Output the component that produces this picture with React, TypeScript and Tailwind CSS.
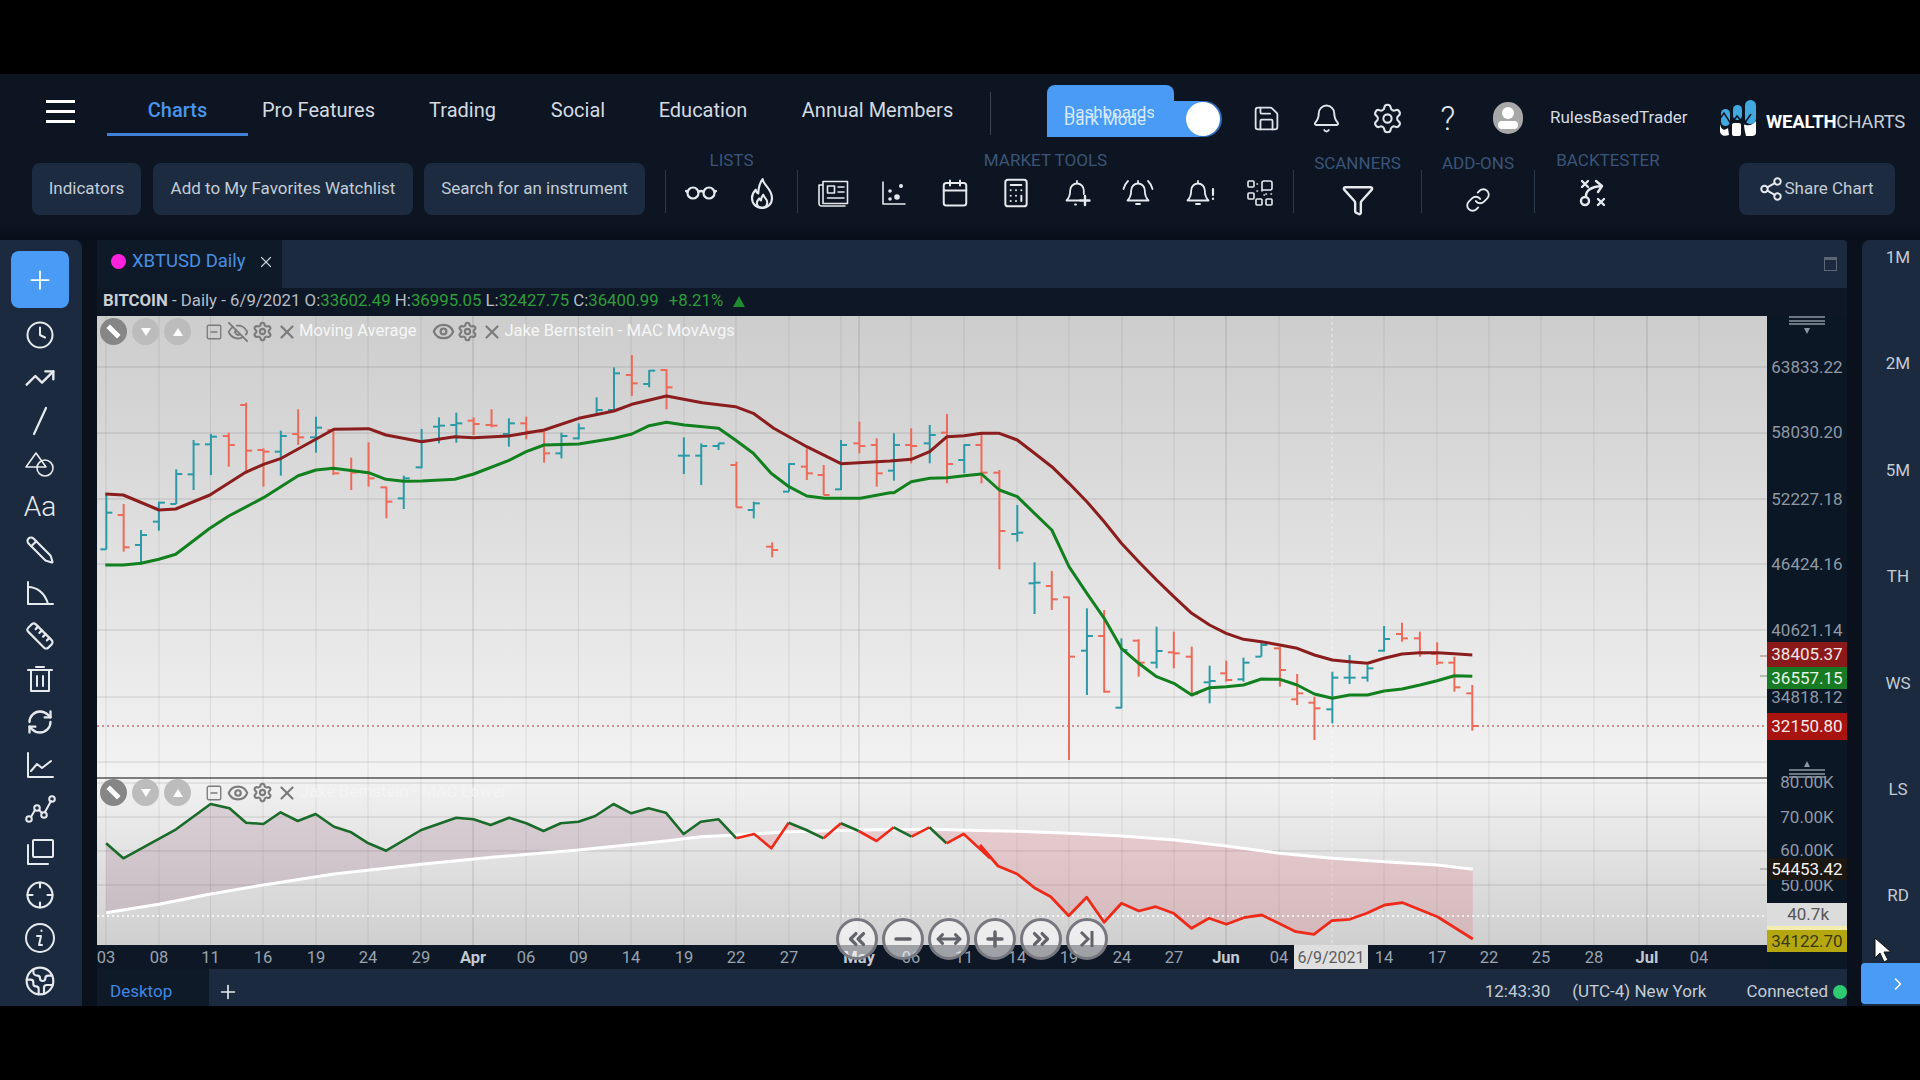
import React from 'react';
import { Calendar, Calculator, Bell, Funnel, Link, Save, Settings, Share2, Clock, TrendingUp, Pencil, Ruler, RefreshCw, Earth, Crosshair, X, Plus, Minus, ChevronsLeft, ChevronsRight, ChevronRight, MoveHorizontal, Eye, EyeOff, SquareMinus } from 'lucide-react';

type Pt = [number, number];
const z4 = (p: Pt): Pt => [90 + p[0] / 1.96, 310 + p[1] / 3];
const z5 = (p: Pt): Pt => [880 + p[0] / 1.5077, 310 + p[1] / 3];
const z6 = (p: Pt): Pt => [90 + p[0] / 1.742, 770 + p[1] / 3];
const z7 = (p: Pt): Pt => [980 + p[0] / 1.668, 770 + p[1] / 3];
const pts = (a: Pt[]) => a.map((p) => `${p[0].toFixed(1)},${p[1].toFixed(1)}`).join(' ');

type Bar = [number, number, number, number, number, string];
const barsA: Bar[] = [
  [32, 555, 718, 718, 608, 't'], [66, 582, 725, 615, 712, 'r'], [100, 660, 765, 705, 675, 't'], [135, 575, 662, 635, 578, 't'],
  [169, 478, 582, 582, 492, 't'], [203, 390, 540, 493, 403, 't'], [237, 372, 495, 403, 380, 't'], [272, 368, 470, 378, 405, 'r'],
  [306, 278, 490, 285, 422, 'r'], [340, 415, 530, 420, 425, 'r'], [374, 362, 497, 425, 378, 't'], [408, 298, 405, 372, 382, 'r'],
  [443, 320, 428, 382, 353, 't'], [477, 355, 495, 360, 490, 'r'], [512, 443, 540, 480, 488, 'r'], [546, 397, 530, 487, 505, 'r'],
  [581, 530, 625, 532, 575, 'r'], [615, 497, 597, 565, 505, 't'], [650, 357, 475, 472, 392, 't'], [684, 322, 400, 350, 347, 't'],
  [718, 308, 398, 345, 340, 't'], [752, 322, 375, 332, 342, 'r'], [787, 298, 352, 345, 347, 'r'], [821, 325, 410, 372, 340, 't'],
  [855, 320, 388, 340, 365, 'r'], [890, 365, 458, 365, 430, 'r'], [924, 368, 445, 430, 378, 't'], [958, 340, 388, 385, 355, 't'],
  [993, 262, 315, 315, 300, 't'], [1027, 172, 300, 300, 190, 't'], [1062, 135, 258, 195, 220, 'r'], [1096, 180, 232, 222, 182, 't'],
  [1130, 178, 298, 180, 232, 'r'], [1164, 382, 492, 437, 437, 't'], [1198, 400, 525, 437, 408, 't'], [1232, 400, 420, 408, 400, 't'],
  [1267, 455, 592, 465, 592, 'r'], [1301, 575, 625, 600, 580, 't'], [1337, 697, 742, 710, 720, 'r'], [1370, 460, 545, 545, 462, 't'],
  [1405, 415, 510, 470, 490, 'r'], [1438, 465, 555, 495, 555, 'r'], [1472, 390, 540, 538, 405, 't'], [1508, 335, 430, 400, 408, 'r'],
  [1542, 385, 530, 405, 490, 'r'],
];
const barsB: Bar[] = [
  [21, 370, 512, 482, 405, 't'], [47, 355, 460, 405, 408, 'r'], [75, 345, 460, 400, 375, 't'], [101, 312, 520, 368, 462, 'r'],
  [127, 403, 490, 450, 405, 't'], [153, 370, 520, 405, 488, 'r'], [180, 480, 778, 488, 663, 'r'], [207, 585, 695, 672, 668, 't'],
  [233, 757, 912, 820, 818, 't'], [259, 783, 900, 828, 868, 'r'], [285, 860, 1350, 862, 1040, 'r'], [312, 895, 1155, 1022, 978, 't'],
  [338, 900, 1148, 978, 1145, 'r'], [364, 985, 1195, 1193, 1020, 't'], [390, 988, 1100, 992, 1058, 'r'], [417, 950, 1075, 1058, 1023, 't'],
  [443, 965, 1075, 1027, 1030, 'r'], [470, 1010, 1155, 1040, 1152, 'r'], [497, 1067, 1180, 1117, 1113, 't'], [522, 1052, 1115, 1090, 1110, 'r'],
  [548, 1043, 1115, 1108, 1058, 't'], [575, 995, 1040, 1040, 1005, 't'], [603, 1010, 1130, 1015, 1080, 'r'], [629, 1092, 1185, 1168, 1150, 'r'],
  [655, 1160, 1290, 1178, 1195, 'r'], [682, 1085, 1240, 1198, 1103, 't'], [708, 1035, 1122, 1103, 1103, 't'], [735, 1065, 1115, 1103, 1075, 't'],
  [760, 948, 1025, 1022, 987, 't'], [787, 938, 995, 972, 985, 'r'], [814, 965, 1040, 985, 1030, 'r'], [840, 997, 1065, 1032, 1058, 'r'],
  [866, 1040, 1145, 1058, 1132, 'r'], [893, 1125, 1262, 1150, 1248, 'r'],
];
const allBars = [
  ...barsA.map((b) => ({ x: 90 + b[0] / 1.96, hi: 310 + b[1] / 3, lo: 310 + b[2] / 3, o: 310 + b[3] / 3, c: 310 + b[4] / 3, k: b[5] })),
  ...barsB.map((b) => ({ x: 880 + b[0] / 1.5077, hi: 310 + b[1] / 3, lo: 310 + b[2] / 3, o: 310 + b[3] / 3, c: 310 + b[4] / 3, k: b[5] })),
];

const redMA: Pt[] = [
  ...([[30, 552], [65, 555], [135, 600], [168, 597], [235, 555], [305, 487], [340, 463], [375, 445], [478, 358], [546, 356], [580, 375], [650, 395], [715, 380], [752, 383], [820, 378], [890, 360], [958, 325], [1027, 303], [1062, 283], [1130, 258], [1200, 278], [1265, 290], [1300, 310], [1340, 355], [1405, 410], [1472, 461], [1568, 453]] as Pt[]).map(z4),
  ...([[47, 448], [75, 425], [101, 380], [127, 377], [153, 370], [180, 370], [207, 390], [233, 430], [259, 470], [285, 520], [312, 575], [338, 635], [364, 700], [390, 755], [417, 810], [443, 860], [470, 910], [497, 945], [522, 970], [548, 988], [575, 995], [603, 1005], [629, 1015], [655, 1035], [682, 1050], [708, 1055], [735, 1060], [760, 1045], [787, 1032], [814, 1028], [840, 1028], [866, 1031], [893, 1035]] as Pt[]).map(z5),
];
const greenMA: Pt[] = [
  ...([[30, 765], [65, 765], [100, 760], [135, 748], [168, 733], [235, 655], [272, 618], [340, 563], [408, 497], [443, 480], [477, 475], [546, 488], [580, 508], [615, 514], [650, 513], [715, 508], [752, 492], [820, 452], [855, 425], [890, 405], [958, 402], [1027, 385], [1062, 372], [1096, 347], [1130, 337], [1165, 345], [1232, 355], [1265, 390], [1300, 430], [1335, 490], [1370, 530], [1405, 558], [1440, 565], [1510, 565], [1568, 548]] as Pt[]).map(z4),
  ...([[21, 548], [47, 515], [75, 505], [101, 503], [127, 497], [153, 492], [180, 540], [207, 560], [233, 610], [259, 660], [285, 770], [312, 850], [338, 925], [364, 1015], [390, 1060], [417, 1100], [443, 1120], [470, 1155], [497, 1133], [522, 1130], [548, 1125], [575, 1107], [603, 1108], [629, 1125], [655, 1152], [682, 1165], [708, 1155], [735, 1155], [760, 1143], [787, 1137], [814, 1125], [840, 1112], [866, 1097], [893, 1099]] as Pt[]).map(z5),
];

const oscGreen1 = ([[28, 220], [58, 265], [150, 178], [210, 102], [243, 115], [272, 158], [302, 162], [332, 127], [362, 153], [393, 132], [425, 170], [455, 187], [485, 220], [516, 242], [577, 180], [638, 143], [668, 148], [698, 165], [730, 143], [760, 160], [790, 183], [820, 160], [851, 155], [880, 138], [912, 102], [943, 130], [973, 115], [1003, 128], [1034, 192], [1064, 155], [1095, 148], [1126, 205]] as Pt[]).map(z6);
const oscMid = ([[1126, 205], [1157, 192], [1187, 235], [1217, 158], [1248, 180], [1278, 205], [1308, 160], [1339, 183], [1370, 213], [1400, 172], [1431, 200], [1462, 172], [1492, 220], [1522, 192], [1568, 265]] as Pt[]).map(z6);
const oscEnd = ([[0, 225], [30, 288], [62, 312], [92, 355], [118, 380], [148, 437], [178, 382], [207, 457], [236, 400], [265, 423], [293, 410], [323, 430], [353, 475], [382, 445], [411, 463], [440, 443], [470, 435], [527, 485], [557, 493], [587, 452], [617, 448], [645, 430], [675, 405], [705, 398], [763, 440], [822, 507]] as Pt[]).map(z7);
const midSegs: [number, number, string][] = [[0, 3, '#ee2a1a'], [3, 5, '#1a6a2a'], [5, 6, '#ee2a1a'], [6, 7, '#1a6a2a'], [7, 9, '#ee2a1a'], [9, 10, '#1a6a2a'], [10, 11, '#ee2a1a'], [11, 12, '#1a6a2a'], [12, 14, '#ee2a1a']];
const whiteLine: Pt[] = [
  ...([[28, 428], [120, 403], [210, 372], [302, 345], [425, 312], [577, 283], [700, 262], [851, 240], [1003, 213], [1064, 200], [1126, 195], [1217, 185], [1339, 180], [1462, 178], [1568, 182]] as Pt[]).map(z6),
  ...([[62, 184], [148, 190], [236, 198], [325, 210], [411, 228], [499, 250], [587, 265], [675, 275], [763, 285], [822, 298]] as Pt[]).map(z7),
];
const oscPoly = [...oscGreen1, ...oscMid.slice(1), ...oscEnd, ...[...whiteLine].reverse()];

const dates: [number, string, boolean][] = [
  [106, '03', false], [159, '08', false], [210.5, '11', false], [263, '16', false], [316, '19', false], [368, '24', false], [421, '29', false], [473, 'Apr', true], [526, '06', false], [578.5, '09', false], [631, '14', false], [684, '19', false], [736, '22', false], [789, '27', false], [859, 'May', true], [911, '06', false], [964, '11', false], [1017, '14', false], [1069, '19', false], [1122, '24', false], [1174, '27', false], [1226, 'Jun', true], [1279, '04', false], [1384, '14', false], [1437, '17', false], [1489, '22', false], [1541, '25', false], [1594, '28', false], [1647, 'Jul', true], [1699, '04', false],
];
const gridX = [106, 159, 210.5, 263, 316, 368, 421, 473, 526, 578.5, 631, 684, 736, 789, 841, 859, 911, 964, 1017, 1069, 1122, 1174, 1226, 1279, 1384, 1437, 1489, 1541, 1594, 1647, 1699];
const darkX = [473, 859, 1226, 1647];
const gridY = [367, 433, 499, 564, 630, 697, 762, 783, 817, 851, 885];

const priceLabels: [number, string][] = [[367, '63833.22'], [432, '58030.20'], [499, '52227.18'], [564, '46424.16'], [630, '40621.14'], [696.5, '34818.12'], [782, '80.00K'], [817, '70.00K'], [850, '60.00K'], [884.5, '50.00K']];

const S = { strokeWidth: 1.6, fill: 'none', stroke: 'currentColor', strokeLinecap: 'round', strokeLinejoin: 'round' } as any;
const BELL = 'M15 5.500a6.800 6.800 0 0 0-6.800 6.800c0 5-1.200 7.800-3.700 10.200h21c-2.500-2.400-3.700-5.200-3.700-10.200A6.800 6.800 0 0 0 15 5.500zM15 3v2.500M13 26h4';

const Glasses = () => (<svg width="32" height="16" viewBox="0 0 32 16" {...S} strokeWidth={2.200}><circle cx="8" cy="8" r="5.500" /><circle cx="24" cy="8" r="5.500" /><path d="M13.500 7c1.500-1.200 3.500-1.200 5 0M2.500 7 1 6M29.500 7 31 6" /></svg>);
const Fire = () => (<svg width="30" height="33" viewBox="0 0 24 26" {...S} strokeWidth={1.700}><path d="M12.500 1.500c.5 4.500 7.500 8 7.500 15 0 5-3.500 8-8 8s-8-3.200-8-8c0-3 1.500-5 3-6.500.3 1.500.8 2.500 2 3 .2-4.500 1-8.500 3.500-11.500z" /><path d="M12 24.500c-2.800 0-4.500-2.200-4-4.500.2-1.500 1.200-2.300 1.800-3 .3.800.8 1.300 1.400 1.500.2-1.800.7-3.200 1.800-4.500.3 2 3.500 3.500 3.200 6.500-.2 2.300-1.800 4-4.200 4z" /></svg>);
const News = () => (<svg width="32" height="27" viewBox="0 0 32 27" {...S}><path d="M6 1.500h24.500v22H6zM6 5H2v18.500a2.500 2.500 0 0 0 2.500 2.500H28" /><rect x="10.500" y="6" width="7" height="7" /><path d="M21 7h6M21 12h6M10.500 18h16.500" /></svg>);
const Scatter = () => (<svg width="26" height="26" viewBox="0 0 26 26" {...S}><path d="M2 2v22h22" /><circle cx="16" cy="17" r="2" fill="currentColor" /><circle cx="9" cy="19" r="1" fill="currentColor" /><circle cx="9" cy="11" r="1" fill="currentColor" /><circle cx="20" cy="6" r="1.200" fill="currentColor" /></svg>);
const BellAdd = () => (<svg width="30" height="30" viewBox="0 0 30 30" {...S} strokeWidth={1.800}><path d="M15 3v2.500M13 26.500h1M15 5.500a6.800 6.800 0 0 0-6.800 6.800c0 5-1.200 7.800-3.700 10.200H18M21.800 16v-3.700A6.800 6.800 0 0 0 15 5.500" /><path d="M23 18v9M18.500 22.500h9" strokeWidth={2.400} /></svg>);
const BellRings = () => (<svg width="32" height="30" viewBox="0 0 32 30" {...S} strokeWidth={1.800}><g transform="translate(1 0)"><path d={BELL} /></g><path d="M6 3C3.500 5.500 2 8 1.500 11M26 3c2.500 2.500 4 5 4.500 8" /></svg>);
const BellBang = () => (<svg width="32" height="30" viewBox="0 0 32 30" {...S} strokeWidth={1.800}><path d={BELL} /><path d="M30 11v6M30 20.500v.5" strokeWidth={2.200} /></svg>);
const QrLike = () => (<svg width="30" height="30" viewBox="0 0 30 30" {...S}><rect x="3" y="3" width="6" height="6" rx="1" /><rect x="3" y="15" width="6" height="6" rx="1" /><rect x="11" y="21" width="6" height="6" rx="1" /><rect x="21" y="21" width="6" height="6" rx="1" /><path d="M17 13V5a2 2 0 0 1 2-2h6a2 2 0 0 1 2 2v5a2 2 0 0 1-2 2h-8" /><path d="M12 6h.5M12 13h.5M21 16h.5M26 16h.5M19 17h.5" /></svg>);
const Plays = () => (<svg width="30" height="30" viewBox="0 0 30 30" {...S} strokeWidth={2.400}><path d="M4 3l6 6M10 3 4 9M20 21l6 6M26 21l-6 6" /><circle cx="7" cy="23" r="4" /><path d="M8 18c0-6 5-9 15-10M18 3l6 5-4 6" /></svg>);
const Shapes = () => (<svg width="32" height="30" viewBox="0 0 32 30" {...S}><path d="M12 4 2 18h20z" /><circle cx="21" cy="19" r="8" /></svg>);
const Angle = () => (<svg width="30" height="28" viewBox="0 0 30 28" {...S} strokeWidth={2}><path d="M3 3v22h25" /><path d="M3 8c9 0 17 6 20 17" /></svg>);
const ChartL = () => (<svg width="30" height="30" viewBox="0 0 30 30" {...S} strokeWidth={2}><path d="M3 3v24h25" /><path d="M6 21l6-7 5 4 9-7" /></svg>);
const Line = () => (<svg width="30" height="30" viewBox="0 0 30 30" {...S} strokeWidth={2.200}><path d="M9 28 21 2" /></svg>);
const Trash = () => (<svg width="28" height="28" viewBox="0 0 28 28" {...S} strokeWidth={2}><path d="M2 5h24M10 2h8M5 6v20h18V6M11 11v10M17 11v10" /></svg>);
const Nodes = () => (<svg width="32" height="30" viewBox="0 0 32 30" {...S} strokeWidth={2}><circle cx="5" cy="25" r="2.800" /><circle cx="13" cy="14" r="2.800" /><circle cx="20" cy="21" r="2.800" /><circle cx="28" cy="5" r="2.800" /><path d="M7 23l4-7M15 16l3 3M21 18l6-11" /></svg>);
const Stack = () => (<svg width="30" height="30" viewBox="0 0 30 30" {...S} strokeWidth={2}><rect x="8" y="3" width="20" height="17" rx="1" /><path d="M3 8v19h20" /></svg>);
const InfoI = () => (<svg width="32" height="32" viewBox="0 0 32 32" {...S} strokeWidth={2}><circle cx="16" cy="16" r="14" /><path d="M17.500 8.500v.5M13 14h4l-2 9h3" /></svg>);
const Ham = () => (<div className="flex flex-col gap-[7px] w-[29px] mt-[26px] ml-[46px]"><div className="h-[3px] bg-white" /><div className="h-[3px] bg-white" /><div className="h-[3px] bg-white" /></div>);

const Logo = () => (
  <svg width="38" height="37" viewBox="0 0 38 37">
    <rect x="2" y="9" width="9" height="17" rx="4.500" fill="#3fa9e0" />
    <rect x="14" y="5" width="9" height="15" rx="4.500" fill="#3fa9e0" />
    <rect x="26" y="0" width="11" height="24" rx="5.500" fill="#3fa9e0" />
    <path d="M1 24c1 6 4 7 8 4l1 7c-5 2-9 0-9-4z" fill="#fff" />
    <rect x="13" y="23" width="9" height="13" rx="2" fill="#fff" />
    <path d="M25 24c3 2 8 2 12-3v12c0 2-2 3-4 3h-6c-1-4-2-8-2-12z" fill="#fff" />
    <path d="M0 20 5 13 12 24 18 16 25 24 32 14" fill="none" stroke="#0c1521" strokeWidth="1.500" />
  </svg>
);

const Sep = () => <div className="w-px h-[43px] mt-[20px] bg-[#2c3a4e] shrink-0" />;
const Lbl = ({ children }: any) => <div className="h-5 leading-5 text-[17px] text-[#3c5478] text-center whitespace-nowrap">{children}</div>;
const IconCell = ({ children }: any) => <div className="w-[61px] h-10 flex items-center justify-center text-[#e6eaef]">{children}</div>;

const TopBtn = ({ w, children }: any) => <div className={`${w} h-[52px] mt-[13px] rounded-lg bg-[#1c2b40] text-[#c3ccd6] text-[17px] flex items-center justify-center whitespace-nowrap shrink-0`}>{children}</div>;

const Circle = ({ children, dark }: any) => (
  <div className={`w-[27px] h-[27px] rounded-full flex items-center justify-center ${dark ? 'bg-[#868686]' : 'bg-[#bcbcbc]'} text-[#eeeeee]`}>{children}</div>
);
const LegendBase = () => (
  <div className="flex items-center gap-[5px]">
    <Circle dark><div className="w-[15px] h-[5px] bg-white rotate-45" /></Circle>
    <Circle><svg width="10" height="8" viewBox="0 0 10 8"><path d="M0 0h10L5 8z" fill="#fff" /></svg></Circle>
    <Circle><svg width="10" height="8" viewBox="0 0 10 8"><path d="M0 8h10L5 0z" fill="#fff" /></svg></Circle>
  </div>
);
const Nav = ({ children }: any) => (
  <div className="w-[42px] h-[42px] rounded-full bg-[#ffffff99] border-[3px] border-[#77777f] flex items-center justify-center text-[#63636b]">{children}</div>
);

export default function App() {
  const sideIcons = [
    <Clock size={30} strokeWidth={1.6} />, <TrendingUp size={32} strokeWidth={1.8} />, <Line />, <Shapes />,
    <span className="text-[28px] font-light leading-none text-[#e6eaef]">Aa</span>, <Pencil size={30} strokeWidth={1.7} className="-scale-x-100" />, <Angle />, <Ruler size={30} strokeWidth={1.7} />,
    <Trash />, <RefreshCw size={28} strokeWidth={2} />, <ChartL />, <Nodes />, <Stack />, <Crosshair size={30} strokeWidth={1.7} />, <InfoI />, <Earth size={32} strokeWidth={1.6} />,
  ];
  const rightLabels = ['1M', '2M', '5M', 'TH', 'WS', 'LS', 'RD'];
  return (
    <div className="relative w-[1920px] h-[1080px] bg-black overflow-hidden pt-[74px] pb-[74px] font-['Roboto',sans-serif] text-[#d4dae2]">
      {/* header */}
      <div className="h-[166px] bg-[#0c1521]">
        <div className="h-[76px] flex items-start">
          <Ham />
          <div className="flex ml-[32px] text-[20px] text-[#d4dae2] h-[62px]">
            <div className="w-[141px] h-[62px] pt-[24px] leading-6 text-center border-b-[3px] border-[#3f82d8] text-[#4a95ec] font-medium">Charts</div>
            <div className="w-[141px] pt-[24px] leading-6 text-center whitespace-nowrap">Pro Features</div>
            <div className="w-[147px] pt-[24px] leading-6 text-center">Trading</div>
            <div className="w-[84px] pt-[24px] leading-6 text-center">Social</div>
            <div className="w-[166px] pt-[24px] leading-6 text-center">Education</div>
            <div className="w-[183px] pt-[24px] leading-6 text-center whitespace-nowrap">Annual Members</div>
          </div>
          <div className="w-px h-[43px] mt-[18px] ml-[21px] bg-[#3a4656]" />
          <div className="relative w-[175px] h-[52px] mt-[11px] ml-[56px] flex items-end">
            <div className="w-full h-[36px] rounded-r-full bg-[#2f6fc4] flex items-center justify-end pr-[2px]">
              <div className="w-[34px] h-[34px] rounded-full bg-white z-10" />
            </div>
            <div className="absolute left-0 top-0 w-[127px] h-[52px] rounded-lg bg-[#4a9bf5]" />
            <div className="absolute left-0 bottom-0 w-[166px] h-[36px] rounded-l-lg rounded-r-full bg-[#4a9bf5]" />
            <div className="absolute left-[17px] top-[17px] w-[90px] overflow-hidden text-[17px] leading-5 text-[#d5e8ff] whitespace-nowrap">Dashboards</div>
            <div className="absolute left-[17px] top-[24px] text-[17px] leading-5 text-[#d5e8ff] whitespace-nowrap">Dark Mode</div>
          </div>
          <div className="flex ml-[14px] mt-[28px] text-[#dfe4ea]">
            <div className="w-[60.5px] h-8 flex items-center justify-center"><Save size={29} strokeWidth={1.5} /></div>
            <div className="w-[60.5px] h-8 flex items-center justify-center"><Bell size={31} strokeWidth={1.5} /></div>
            <div className="w-[60.5px] h-8 flex items-center justify-center"><Settings size={33} strokeWidth={1.5} /></div>
            <div className="w-[60.5px] h-8 flex items-center justify-center text-[33px] font-light leading-none">?</div>
            <div className="w-[60.5px] h-8 flex items-center justify-center">
              <div className="w-[30px] h-[32px] rounded-full bg-[#a8a8a8] flex flex-col items-center justify-center gap-[2px] overflow-hidden">
                <div className="w-[12px] h-[12px] rounded-full bg-white" />
                <div className="w-[20px] h-[8px] rounded-full bg-white" />
              </div>
            </div>
          </div>
          <div className="ml-[11.5px] mt-[31px] w-[140px] text-[17px] leading-6 text-[#d4dae2] whitespace-nowrap">RulesBasedTrader</div>
          <div className="ml-[29px] mt-[26px]"><Logo /></div>
          <div className="ml-[9px] mt-[36px] text-[18.5px] leading-6 whitespace-nowrap tracking-[-0.2px]"><span className="font-bold text-white">WEALTH</span><span className="text-[#c9ced6]">CHARTS</span></div>
        </div>
        <div className="h-[90px] flex items-start bg-gradient-to-b from-[#0c1521] from-[80%] to-[#08101a]">
          <div className="w-[32px] shrink-0" />
          <TopBtn w="w-[109px]">Indicators</TopBtn>
          <div className="w-[12px] shrink-0" />
          <TopBtn w="w-[260px]">Add to My Favorites Watchlist</TopBtn>
          <div className="w-[11px] shrink-0" />
          <TopBtn w="w-[221px]">Search for an instrument</TopBtn>
          <div className="w-[20px] shrink-0" />
          <Sep />
          <div className="w-[131px] shrink-0">
            <Lbl>LISTS</Lbl>
            <div className="flex justify-center mt-[3px]">
              <IconCell><Glasses /></IconCell>
              <IconCell><Fire /></IconCell>
            </div>
          </div>
          <Sep />
          <div className="w-[495px] shrink-0">
            <Lbl>MARKET TOOLS</Lbl>
            <div className="flex justify-center mt-[3px] pl-[2px]">
              <IconCell><News /></IconCell>
              <IconCell><Scatter /></IconCell>
              <IconCell><Calendar size={30} strokeWidth={1.6} /></IconCell>
              <IconCell><Calculator size={32} strokeWidth={1.5} /></IconCell>
              <IconCell><BellAdd /></IconCell>
              <IconCell><BellRings /></IconCell>
              <IconCell><BellBang /></IconCell>
              <IconCell><QrLike /></IconCell>
            </div>
          </div>
          <Sep />
          <div className="w-[127px] shrink-0 pt-[3px]">
            <Lbl>SCANNERS</Lbl>
            <div className="flex justify-center mt-[7px]"><IconCell><Funnel size={34} strokeWidth={1.7} /></IconCell></div>
          </div>
          <Sep />
          <div className="w-[112px] shrink-0 pt-[3px]">
            <Lbl>ADD-ONS</Lbl>
            <div className="flex justify-center mt-[7px]"><IconCell><Link size={26} strokeWidth={1.7} /></IconCell></div>
          </div>
          <Sep />
          <div className="w-[146px] shrink-0">
            <Lbl>BACKTESTER</Lbl>
            <div className="flex justify-center mt-[3px] pr-[30px]"><IconCell><Plays /></IconCell></div>
          </div>
          <div className="w-[58px] shrink-0" />
          <div className="w-[156px] h-[52px] mt-[13px] rounded-lg bg-[#1c2b40] text-[#c3ccd6] text-[17px] flex items-center justify-center gap-[1px] pr-[3px] whitespace-nowrap shrink-0"><Share2 size={26} strokeWidth={1.8} className="text-[#e6eaef]" />Share Chart</div>
        </div>
      </div>

      {/* main */}
      <div className="h-[766px] flex bg-[#0a111c]">
        {/* sidebar */}
        <div className="w-[82px] shrink-0 rounded-tr-lg bg-[#1b2a3e] flex flex-col items-center pt-[11px] pr-[2px] text-[#e6eaef]">
          <div className="w-[58px] h-[57px] rounded-lg bg-[#4a9bf5] flex items-center justify-center mb-[5px]"><Plus size={30} strokeWidth={1.4} className="text-white" /></div>
          {sideIcons.map((ic, i) => (
            <div key={i} className="h-[43.1px] flex items-center justify-center shrink-0">{ic}</div>
          ))}
        </div>

        {/* chart card */}
        <div className="w-[1750px] ml-[15px] flex flex-col shrink-0">
          <div className="h-[48px] bg-[#1b2a3e] flex items-stretch shrink-0 rounded-t-sm">
            <div className="w-[185px] bg-[#0f1a28] flex items-center pl-[14px] pb-[5px] text-[18.5px]">
              <div className="w-[15px] h-[15px] rounded-full bg-[#ff22dd]" />
              <span className="ml-[6px] text-[#4a8fe0] whitespace-nowrap">XBTUSD Daily</span>
              <X size={18} strokeWidth={1.6} className="ml-[11px] text-[#c3ccd6]" />
            </div>
            <div className="flex-1 flex items-center justify-end pr-[10px]"><div className="w-[13px] h-[14px] border border-t-[3px] border-[#5c6675]" /></div>
          </div>
          <div className="h-[28px] bg-[#0d1725] flex items-center pl-[6px] pb-[2px] text-[16.8px] whitespace-nowrap shrink-0 text-[#b8bec6]">
            <span className="font-bold text-[#c9ced6]">BITCOIN</span>&nbsp;- Daily - 6/9/2021 O:<span className="text-[#2f9e3a]">33602.49</span>&nbsp;H:<span className="text-[#2f9e3a]">36995.05</span>&nbsp;L:<span className="text-[#2f9e3a]">32427.75</span>&nbsp;C:<span className="text-[#2f9e3a]">36400.99</span><span className="ml-[10px] text-[#2f9e3a]">+8.21%</span>
            <svg width="12" height="11" viewBox="0 0 12 11" className="ml-[10px]"><path d="M0 11h12L6 0z" fill="#1f8a2f" /></svg>
          </div>
          <div className="flex h-[653px] shrink-0">
            <div className="w-[1670px] flex flex-col shrink-0">
              <div className="relative h-[629px] flex flex-col shrink-0 overflow-hidden">
                <div className="h-[461px] bg-gradient-to-b from-[#cdcdcd] to-[#f3f3f3]" />
                <div className="flex-1 border-t-2 border-[#7c7c7c] bg-gradient-to-b from-[#f2f2f2] to-[#cfcfcf]" />
                <svg className="absolute inset-0" width="1670" height="629" viewBox="97 316 1670 629">
                  <defs>
                    <clipPath id="oL"><rect x="97" y="770" width="639" height="180" /></clipPath>
                    <clipPath id="oR"><rect x="736" y="770" width="900" height="180" /></clipPath>
                  </defs>
                  {gridY.map((y) => <line key={y} x1="97" x2="1767" y1={y} y2={y} stroke="#000" strokeOpacity="0.09" strokeWidth="1.500" />)}
                  {gridX.map((x, i) => <line key={i} x1={x} x2={x} y1="316" y2="945" stroke="#000" strokeOpacity={darkX.includes(x) ? 0.16 : 0.08} strokeWidth="1" />)}
                  <line x1="1332" x2="1332" y1="316" y2="945" stroke="#fff" strokeOpacity="0.6" strokeWidth="1" strokeDasharray="3 3" />
                  <line x1="97" x2="1767" y1="726" y2="726" stroke="#a8343a" strokeWidth="1.200" strokeDasharray="2 3" />
                  {allBars.map((b, i) => {
                    const c = b.k === 'r' ? '#ee6a58' : '#2b9aa6';
                    return (
                      <g key={i} stroke={c} strokeWidth="2" fill="none">
                        <line x1={b.x} x2={b.x} y1={b.hi} y2={b.lo} />
                        <line x1={b.x - 6} x2={b.x} y1={b.o} y2={b.o} />
                        <line x1={b.x} x2={b.x + 6} y1={b.c} y2={b.c} />
                      </g>
                    );
                  })}
                  <polyline points={pts(redMA)} fill="none" stroke="#8a1d1d" strokeWidth="3" strokeLinejoin="round" />
                  <polyline points={pts(greenMA)} fill="none" stroke="#12801f" strokeWidth="3" strokeLinejoin="round" />
                  <line x1="1760" x2="1767" y1="656" y2="656" stroke="#b0a0a0" strokeWidth="1.500" />
                  <line x1="1760" x2="1767" y1="676" y2="676" stroke="#a0b0a0" strokeWidth="1.500" />
                  <line x1="1760" x2="1767" y1="869" y2="869" stroke="#aaa" strokeWidth="1.500" />
                  <polygon points={pts(oscPoly)} fill="#8a5a7a" fillOpacity="0.2" clipPath="url(#oL)" />
                  <polygon points={pts(oscPoly)} fill="#e0485f" fillOpacity="0.18" clipPath="url(#oR)" />
                  <line x1="97" x2="1767" y1="916" y2="916" stroke="#fff" strokeWidth="1.500" strokeDasharray="2 3" />
                  <polyline points={pts(whiteLine)} fill="none" stroke="#fff" strokeWidth="3" strokeLinejoin="round" />
                  <polyline points={pts(oscGreen1)} fill="none" stroke="#1a6a2a" strokeWidth="2.600" strokeLinejoin="round" />
                  {midSegs.map(([a, b, c], i) => <polyline key={i} points={pts(oscMid.slice(a, b + 1))} fill="none" stroke={c} strokeWidth="2.600" strokeLinejoin="round" />)}
                  <polyline points={pts(oscEnd)} fill="none" stroke="#ee2a1a" strokeWidth="2.800" strokeLinejoin="round" />
                </svg>
                {/* upper legend */}
                <div className="absolute left-[3px] top-[2px] h-[27px] flex items-center text-[#7b7b7b] whitespace-nowrap">
                  <LegendBase />
                  <SquareMinus size={18} strokeWidth={1.8} className="ml-[14px]" />
                  <EyeOff size={22} strokeWidth={2} className="ml-[4px]" />
                  <Settings size={21} strokeWidth={2.400} className="ml-[3px]" />
                  <X size={22} strokeWidth={2.400} className="ml-[3px]" />
                  <span className="ml-[1px] text-[16.5px] text-[#f6f6f6]">Moving Average</span>
                  <Eye size={23} strokeWidth={2.400} className="ml-[16px]" />
                  <Settings size={21} strokeWidth={2.400} className="ml-[2px]" />
                  <X size={22} strokeWidth={2.400} className="ml-[3px]" />
                  <span className="ml-[1px] text-[16.6px] text-[#f6f6f6]">Jake Bernstein - MAC MovAvgs</span>
                </div>
                {/* lower legend */}
                <div className="absolute left-[3px] top-[463px] h-[27px] flex items-center text-[#7b7b7b] whitespace-nowrap">
                  <LegendBase />
                  <SquareMinus size={18} strokeWidth={1.8} className="ml-[14px]" />
                  <Eye size={22} strokeWidth={2.400} className="ml-[4px]" />
                  <Settings size={21} strokeWidth={2.400} className="ml-[3px]" />
                  <X size={22} strokeWidth={2.400} className="ml-[3px]" />
                  <span className="ml-[2px] text-[16.5px] text-[#f4f4f4]">Jake Bernstein - MAC Lower</span>
                </div>
              </div>
              {/* x axis */}
              <div className="relative h-[24px] bg-[#0d1725] text-[16.5px] text-[#9aa3ae] shrink-0">
                {dates.map(([x, t, b], i) => (
                  <span key={i} className={`absolute top-[1px] leading-6 -translate-x-1/2 ${b ? 'font-bold text-[#c3c9d0]' : ''}`} style={{ left: x - 97 }}>{t}</span>
                ))}
                <div className="absolute left-[1197px] top-0 w-[74px] h-[24px] pt-[1px] bg-[#dfdfdf] text-[#5c5c5c] text-[16px] text-center leading-6">6/9/2021</div>
              </div>
            </div>
            {/* price axis */}
            <div className="relative w-[80px] shrink-0 bg-[#0c1725] text-[17px] text-[#8f99a5]">
              {priceLabels.map(([y, t]) => (
                <span key={t} className="absolute left-0 w-full text-center leading-5 -translate-y-1/2" style={{ top: y - 316 }}>{t}</span>
              ))}
              <svg className="absolute left-[22px] top-0" width="36" height="20" viewBox="0 0 36 20"><path d="M0 1h36M0 5h36M0 8h36" stroke="#8d96a2" strokeWidth="1.500" /><path d="M15 12h6l-3 6z" fill="#8d96a2" /></svg>
              <svg className="absolute left-[22px] top-[445px]" width="36" height="18" viewBox="0 0 36 18"><path d="M15 6h6l-3-6z" fill="#8d96a2" /><path d="M0 9h36M0 13h36M0 16h36" stroke="#8d96a2" strokeWidth="1.500" /></svg>
              <div className="absolute left-0 top-[326px] w-full h-[25px] bg-[#8a1a1a] text-[#f3e6e6] text-center leading-[25px]">38405.37</div>
              <div className="absolute left-0 top-[351px] w-full h-[22px] bg-[#187a22] text-[#e6f6e6] text-center leading-[22px]">36557.15</div>
              <div className="absolute left-0 top-[397px] w-full h-[27px] bg-[#a81410] text-[#fbeaea] text-center leading-[27px]">32150.80</div>
              <div className="absolute left-0 top-[542px] w-full h-[22px] bg-[#1c1710] text-[#f2f2f2] text-center leading-[22px]">54453.42</div>
              <div className="absolute left-0 top-[587px] w-full h-[23px] bg-[#dcdcdc] text-[#555] text-right pr-[18px] leading-[23px]">40.7k</div>
              <div className="absolute left-0 top-[610px] w-full h-[4px] bg-[#f3eeb0]" />
              <div className="absolute left-0 top-[614px] w-full h-[22px] bg-[#b5a70f] text-[#3a3a10] text-center leading-[22px]">34122.70</div>
            </div>
          </div>
          {/* status bar */}
          <div className="h-[37px] bg-[#1b2a3e] flex items-center text-[17px] text-[#c3ccd6] shrink-0 overflow-hidden">
            <div className="w-[112px] h-full bg-[#0f1a28] flex items-center pl-[13px] pt-[9px] text-[#3f88e0]">Desktop</div>
            <Plus size={22} strokeWidth={1.8} className="ml-[8px] mt-[9px] text-[#e6eaef]" />
            <div className="ml-auto pt-[9px] whitespace-nowrap">12:43:30</div>
            <div className="ml-[22px] pt-[9px] whitespace-nowrap">(UTC-4) New York</div>
            <div className="ml-[40px] pt-[9px] whitespace-nowrap">Connected</div>
            <div className="w-[14px] h-[14px] rounded-full bg-[#2ecc71] ml-[5px] mt-[9px]" />
          </div>
        </div>

        {/* right */}
        <div className="w-[58px] ml-[15px] shrink-0 rounded-tl-lg bg-[#1b2a3e] flex flex-col pt-[7px] text-[17px] text-[#c3ccd6]">
          <div className="flex flex-col gap-[86.4px] pl-[14px] text-center">
            {rightLabels.map((l) => <div key={l} className="h-5 leading-5">{l}</div>)}
          </div>
          <div className="mt-auto h-[41px] mb-[2px] -ml-px rounded-l-sm bg-[#4a9bf5] flex items-center justify-center pl-[14px] text-white"><ChevronRight size={20} strokeWidth={1.8} /></div>
        </div>
      </div>

      {/* zoom controls over chart */}
      <div className="absolute left-[836px] top-[918px] flex gap-[4px]">
        <Nav><ChevronsLeft size={26} strokeWidth={3} /></Nav>
        <Nav><Minus size={24} strokeWidth={3.500} /></Nav>
        <Nav><MoveHorizontal size={26} strokeWidth={2.800} /></Nav>
        <Nav><Plus size={24} strokeWidth={3.500} /></Nav>
        <Nav><ChevronsRight size={26} strokeWidth={3} /></Nav>
        <Nav>
          <svg width="22" height="22" viewBox="0 0 22 22" fill="none" stroke="currentColor" strokeWidth="3"><path d="M5 4l7 7-7 7M16 3v16" /></svg>
        </Nav>
      </div>
      {/* mouse pointer */}
      <svg className="absolute left-[1874px] top-[937px]" width="19" height="26" viewBox="0 0 19 26"><path d="M1 1v20l5-5 4 9 4-2-4-8h7z" fill="#fff" stroke="#111" strokeWidth="1" /></svg>
    </div>
  );
}
